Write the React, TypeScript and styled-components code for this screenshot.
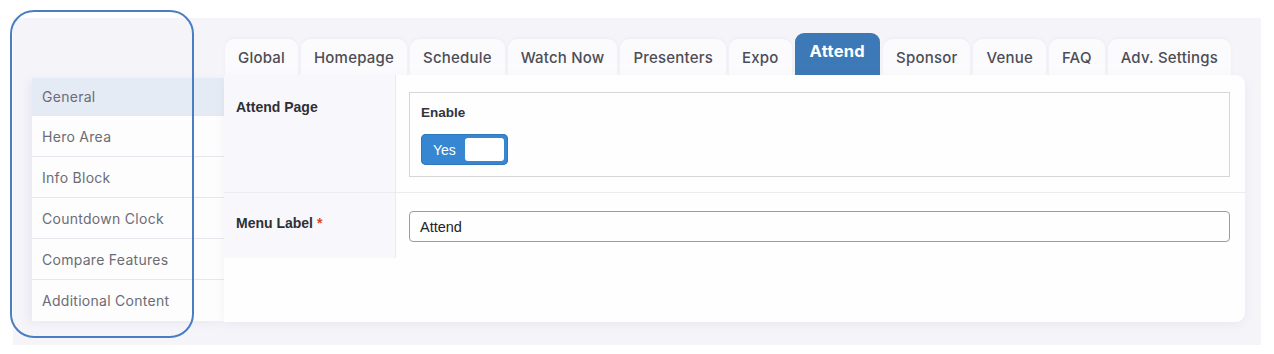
import React from "react";
import styled, { createGlobalStyle } from "styled-components";

const Global = createGlobalStyle`
  html, body { margin: 0; padding: 0; background: #ffffff; }
  body { font-family: Inter, "Noto Sans", sans-serif; }
  * { box-sizing: border-box; }
`;

const Page = styled.div`
  position: relative;
  width: 1274px;
  height: 354px;
  padding: 18px 0 0 13px;
`;

const Panel = styled.div`
  width: 1248px;
  height: 327px;
  background: #f4f4f9;
  display: flex;
  align-items: flex-start;
  padding: 15px 16px 0 19px;
`;

const Sidebar = styled.nav`
  width: 192px;
  margin-top: 45px;
  display: flex;
  flex-direction: column;
  background: #fdfdfe;
  box-shadow: -4px 2px 8px rgba(120, 120, 160, 0.08);
`;

const SideItem = styled.div<{ $active?: boolean; $first?: boolean }>`
  height: ${(p) => (p.$first ? 38 : 41)}px;
  display: flex;
  align-items: center;
  padding-left: 10px;
  font-size: 14px;
  letter-spacing: 0.28px;
  color: #6c6c74;
  background: ${(p) => (p.$active ? "#e5ebf5" : "#fdfdfe")};
  border-bottom: 1px solid #e6e6ec;
  &:last-child { border-bottom: none; }
`;

const Main = styled.div`
  flex: 1;
  display: flex;
  flex-direction: column;
`;

const TabRow = styled.div`
  height: 42px;
  display: flex;
  align-items: flex-end;
  gap: 3px;
  padding-left: 1px;
`;

const Tab = styled.div<{ $active?: boolean }>`
  height: ${(p) => (p.$active ? 42 : 36)}px;
  padding: 0 ${(p) => (p.$active ? 15 : 13)}px;
  display: flex;
  align-items: center;
  justify-content: center;
  border-radius: 9px 9px 0 0;
  font-size: ${(p) => (p.$active ? 16.5 : 15)}px;
  letter-spacing: ${(p) => (p.$active ? 0.3 : 0.2)}px;
  font-weight: ${(p) => (p.$active ? 700 : 500)};
  color: ${(p) => (p.$active ? "#ffffff" : "#4d4d55")};
  background: ${(p) => (p.$active ? "#3c79b6" : "#fbfbfd")};
  padding-bottom: ${(p) => (p.$active ? 6 : 0)}px;
  box-shadow: ${(p) => (p.$active ? "none" : "0 -1px 3px rgba(120,120,160,0.06)")};
`;

const Card = styled.div`
  height: 247px;
  background: #fefefe;
  border-radius: 0 9px 9px 0;
  box-shadow: 0 3px 10px rgba(120, 120, 170, 0.08);
  display: grid;
  grid-template-columns: 172px 1fr;
  grid-template-rows: 118px 65px;
  align-content: start;
`;

const LabelCell = styled.div<{ $last?: boolean }>`
  background: #f8f7fb;
  border-right: 1px solid #e9e9ef;
  border-bottom: ${(p) => (p.$last ? "none" : "1px solid #ebebf0")};
  padding: ${(p) => (p.$last ? 22 : 24)}px 12px 0;
  font-family: "Liberation Sans", Arial, sans-serif;
  font-weight: 700;
  font-size: 14px;
  color: #2f2f34;
`;

const ValueCell = styled.div<{ $last?: boolean }>`
  border-bottom: ${(p) => (p.$last ? "none" : "1px solid #ebebf0")};
  padding: ${(p) => (p.$last ? 18 : 17)}px 15px 0 13px;
`;

const Req = styled.span`
  color: #e0452b;
`;

const FieldBox = styled.div`
  height: 85px;
  border: 1px solid #d6d6d8;
  padding: 12px 11px 0;
  display: flex;
  flex-direction: column;
  gap: 14px;
`;

const FieldTitle = styled.div`
  font-family: "Liberation Sans", Arial, sans-serif;
  font-weight: 700;
  font-size: 13.5px;
  color: #333338;
`;

const Toggle = styled.div`
  width: 87px;
  height: 31px;
  border-radius: 5px;
  background: #3686d1;
  display: flex;
  align-items: center;
  justify-content: space-between;
  padding: 0 4px 0 12px;
  box-shadow: inset 0 0 0 1px #2f78bd;
`;

const ToggleText = styled.span`
  font-family: "Liberation Sans", Arial, sans-serif;
  font-size: 14px;
  color: #ffffff;
`;

const Knob = styled.span`
  width: 39px;
  height: 23px;
  border-radius: 3px;
  background: #ffffff;
`;

const TextInput = styled.div`
  height: 31px;
  border: 1px solid #9c9c9f;
  border-radius: 4px;
  display: flex;
  align-items: center;
  padding-left: 10px;
  font-family: "Liberation Sans", Arial, sans-serif;
  font-size: 14.5px;
  color: #222226;
  background: #fefefe;
`;

const Highlight = styled.div`
  position: absolute;
  left: 10px;
  top: 10px;
  width: 184px;
  height: 328px;
  border: 2px solid #4b7ec0;
  border-radius: 24px;
  pointer-events: none;
`;

const tabs = [
  "Global",
  "Homepage",
  "Schedule",
  "Watch Now",
  "Presenters",
  "Expo",
  "Attend",
  "Sponsor",
  "Venue",
  "FAQ",
  "Adv. Settings",
];

const sideItems = [
  "General",
  "Hero Area",
  "Info Block",
  "Countdown Clock",
  "Compare Features",
  "Additional Content",
];

export default function App() {
  return (
    <>
      <Global />
      <Page>
        <Panel>
          <Sidebar>
            {sideItems.map((s, i) => (
              <SideItem key={s} $active={i === 0} $first={i === 0}>
                {s}
              </SideItem>
            ))}
          </Sidebar>
          <Main>
            <TabRow>
              {tabs.map((t) => (
                <Tab key={t} $active={t === "Attend"}>
                  {t}
                </Tab>
              ))}
            </TabRow>
            <Card>
              <LabelCell>Attend Page</LabelCell>
              <ValueCell>
                <FieldBox>
                  <FieldTitle>Enable</FieldTitle>
                  <Toggle>
                    <ToggleText>Yes</ToggleText>
                    <Knob />
                  </Toggle>
                </FieldBox>
              </ValueCell>
              <LabelCell $last>
                Menu Label <Req>*</Req>
              </LabelCell>
              <ValueCell $last>
                <TextInput>Attend</TextInput>
              </ValueCell>
            </Card>
          </Main>
        </Panel>
        <Highlight />
      </Page>
    </>
  );
}
